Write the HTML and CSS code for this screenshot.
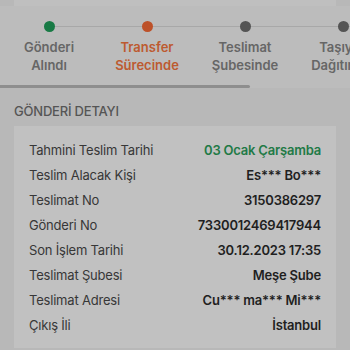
FILE: index.html
```html
<!DOCTYPE html>
<html lang="tr">
<head>
<meta charset="utf-8">
<link rel="stylesheet" href="styles.css">
</head>
<body>
<div class="top-strip"></div>
<div class="stepper">
  <div class="steps">
    <div class="step done">
      <span class="dot"></span>
      <span class="label">Gönderi<br>Alındı</span>
    </div>
    <div class="step active">
      <span class="dot"></span>
      <span class="label">Transfer<br>Sürecinde</span>
    </div>
    <div class="step">
      <span class="dot"></span>
      <span class="label">Teslimat<br>Şubesinde</span>
    </div>
    <div class="step">
      <span class="dot"></span>
      <span class="label">Taşıyıcı<br>Dağıtımda</span>
    </div>
    <div class="step last">
      <span class="dot"></span>
      <span class="label">Teslim<br>Edildi</span>
    </div>
  </div>
  <div class="scrollbar"><div class="thumb"></div></div>
</div>
<h2 class="section-title">GÖNDERİ DETAYI</h2>
<div class="card">
  <div class="row"><span class="k">Tahmini Teslim Tarihi</span><span class="v green">03 Ocak Çarşamba</span></div>
  <div class="row"><span class="k">Teslim Alacak Kişi</span><span class="v">Es*** Bo***</span></div>
  <div class="row"><span class="k">Teslimat No</span><span class="v">3150386297</span></div>
  <div class="row"><span class="k">Gönderi No</span><span class="v">7330012469417944</span></div>
  <div class="row"><span class="k">Son İşlem Tarihi</span><span class="v">30.12.2023 17:35</span></div>
  <div class="row"><span class="k">Teslimat Şubesi</span><span class="v">Meşe Şube</span></div>
  <div class="row"><span class="k">Teslimat Adresi</span><span class="v">Cu*** ma*** Mi***</span></div>
  <div class="row"><span class="k">Çıkış İli</span><span class="v">İstanbul</span></div>
</div>
</body>
</html>
```
FILE: styles.css
```css
* { box-sizing: border-box; }
html, body { margin: 0; padding: 0; }
body {
  width: 350px;
  height: 350px;
  overflow: hidden;
  background: #b8b8b8;
  font-family: Inter, "Noto Sans", sans-serif;
  color: #333;
}
.top-strip {
  height: 6px;
  margin: 0 14px;
  background: #bfbfbf;
}
.stepper {
  background: #bcbcbc;
  overflow: hidden;
}
.steps {
  display: flex;
  width: 490px;
  padding-top: 15px;
}
.step {
  position: relative;
  width: 98px;
  display: flex;
  flex-direction: column;
  align-items: center;
}
.step::after {
  content: "";
  position: absolute;
  top: 5px;
  left: 49px;
  width: 98px;
  height: 1px;
  background: #a8a8a8;
}
.step.last::after { display: none; }
.dot {
  position: relative;
  z-index: 1;
  width: 11px;
  height: 11px;
  border-radius: 50%;
  background: #545454;
}
.step.done .dot { background: #187a45; }
.step.active .dot { background: #bd5129; }
.label {
  margin-top: 6px;
  font-size: 13px;
  font-weight: 600;
  line-height: 18px;
  text-align: center;
  color: #666;
}
.step.active .label { color: #bd5a30; }
.scrollbar {
  margin-top: 11px;
  height: 3px;
}
.thumb {
  width: 250px;
  height: 3px;
  background: #8e8e8e;
  border-radius: 0 2px 2px 0;
}
.section-title {
  margin: 15px 14px 0;
  font-size: 13px;
  font-weight: 500;
  line-height: 16px;
  color: #555;
  letter-spacing: -0.2px;
}
.card {
  margin: 7px 14px 0;
  padding: 11px 15px;
  background: #c1c1c1;
}
.row {
  display: flex;
  justify-content: space-between;
  align-items: center;
  height: 25px;
  font-size: 13px;
}
.k { color: #373737; letter-spacing: -0.2px; }
.v { font-weight: 600; color: #1f1f1f; letter-spacing: -0.2px; }
.v.green { color: #1f7a46; }
```
